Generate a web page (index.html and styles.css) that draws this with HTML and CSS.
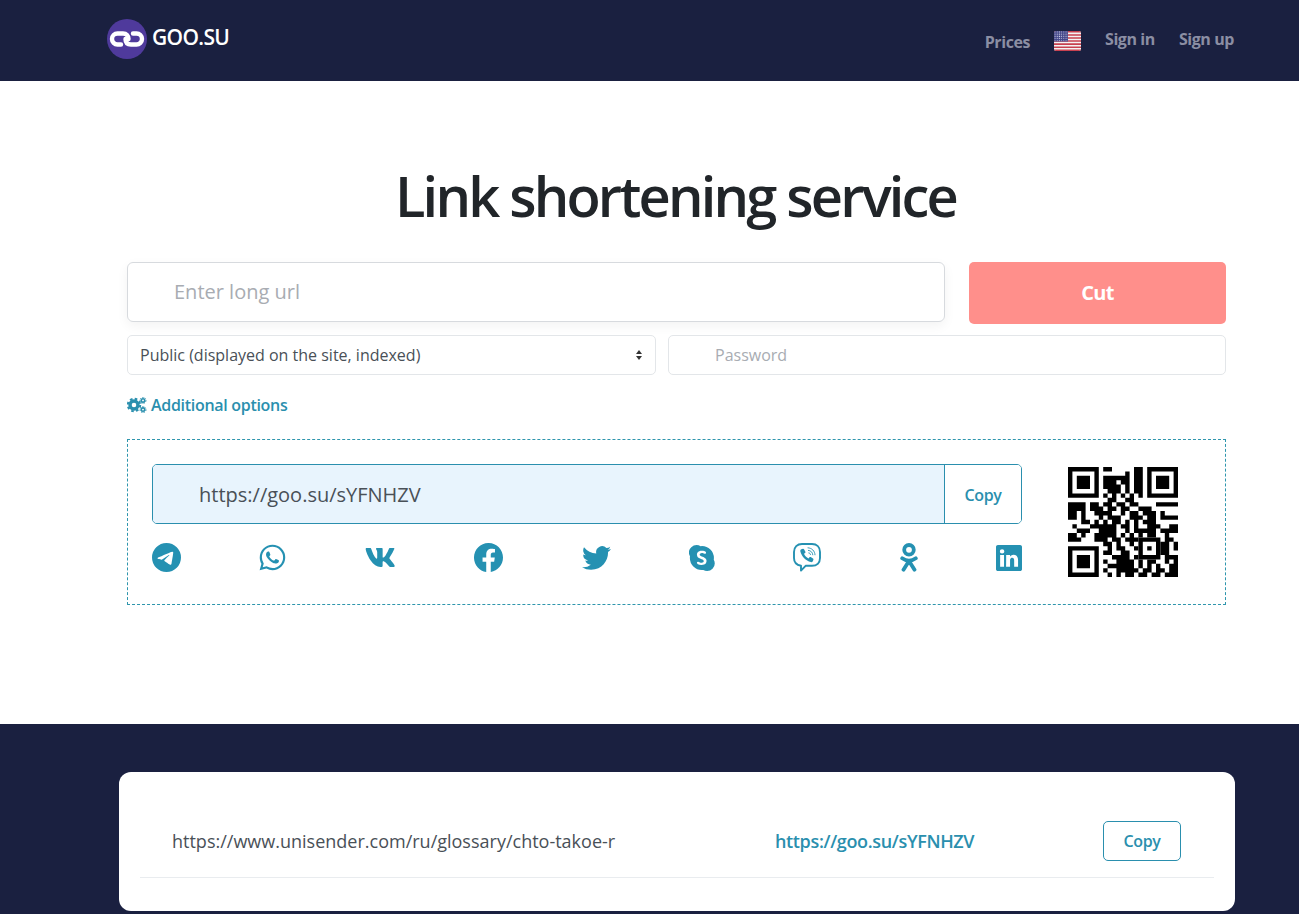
FILE: index.html
```html
<!DOCTYPE html>
<html lang="en">
<head>
<meta charset="utf-8">
<title>GOO.SU</title>
<link rel="stylesheet" href="styles.css">
</head>
<body>
<header class="topbar">
  <a class="brand" href="#">
    <svg class="brand-mark" viewBox="0 0 40 40"><circle cx="20" cy="20" r="20" fill="#4f3a9c"/><path fill="none" stroke="#fff" stroke-width="4.400" stroke-linecap="round" d="M21.500 20c0-3.500-2-5.500-5.500-5.500H10.500a5.500 5.500 0 0 0 0 11H14M18.500 20c0 3.500 2 5.500 5.500 5.500h5.500a5.500 5.500 0 0 0 0-11H26"/></svg>
    <span class="brand-name">GOO.SU</span>
  </a>
  <nav class="nav">
    <a class="nav-link nav-low" href="#">Prices</a>
    <svg class="flag" viewBox="0 0 27 20"><defs><clipPath id="fc"><rect width="27" height="20" rx="2"/></clipPath><pattern id="st" width="2.2" height="2.2" patternUnits="userSpaceOnUse"><circle cx="1" cy="1" r=".55" fill="#d9dcec"/></pattern></defs><g clip-path="url(#fc)"><rect width="27" height="20" fill="#f4f2f2"/><path d="M0 .8h27M0 3.900h27M0 7h27M0 10h27M0 13.100h27M0 16.200h27M0 19.200h27" stroke="#c8404f" stroke-width="1.55"/><rect width="14" height="10.500" fill="#44478a"/><rect width="14" height="10.500" fill="url(#st)"/></g></svg>
    <a class="nav-link" href="#">Sign in</a>
    <a class="nav-link" href="#">Sign up</a>
  </nav>
</header>

<main class="main">
  <h1 class="title">Link shortening service</h1>
  <div class="url-row">
    <div class="long-url">Enter long url</div>
    <button class="cut">Cut</button>
  </div>
  <div class="opt-row">
    <div class="select"><span>Public (displayed on the site, indexed)</span><svg class="carets" viewBox="0 0 8 12"><path d="M4 1l3 4H1zM4 11L1 7h6z" fill="#333"/></svg></div>
    <div class="password">Password</div>
  </div>
  <a class="more" href="#">
    <svg class="cogs" viewBox="0 0 20 16"><g fill="none" stroke="#2a8fae"><circle cx="7" cy="8" r="4" stroke-width="3.400"/><circle cx="7" cy="8" r="6.200" stroke-width="2" stroke-dasharray="2.600 2.270"/><circle cx="16" cy="3.400" r="1.700" stroke-width="1.600"/><circle cx="16" cy="3.400" r="3" stroke-width="1" stroke-dasharray="1.400 1.200"/><circle cx="16" cy="12.600" r="1.700" stroke-width="1.600"/><circle cx="16" cy="12.600" r="3" stroke-width="1" stroke-dasharray="1.400 1.200"/></g></svg>
    <span>Additional options</span>
  </a>
  <section class="result">
    <div class="result-left">
      <div class="short-group">
        <div class="short-url">https://goo.su/sYFNHZV</div>
        <button class="short-copy">Copy</button>
      </div>
      <div class="shares">
        <svg class="ico ico-tg" viewBox="0 0 16 16"><path d="M16 8A8 8 0 1 1 0 8a8 8 0 0 1 16 0zM8.287 5.906c-.778.324-2.334.994-4.666 2.01-.378.15-.577.298-.595.442-.03.243.275.339.69.47l.175.055c.408.133.958.288 1.243.294.26.006.549-.1.868-.32 2.179-1.471 3.304-2.214 3.374-2.23.05-.012.12-.026.166.016.047.041.042.12.037.141-.03.129-1.227 1.241-1.846 1.817-.193.18-.33.307-.358.336a8.154 8.154 0 0 1-.188.186c-.38.366-.664.64.015 1.088.327.216.589.393.85.571.284.194.568.387.936.629.093.06.183.125.27.187.331.236.63.448.997.414.214-.02.435-.22.547-.82.265-1.417.786-4.486.906-5.751a1.426 1.426 0 0 0-.013-.315.337.337 0 0 0-.114-.217.526.526 0 0 0-.31-.093c-.3.005-.763.166-2.984 1.09z"/></svg>
        <svg class="ico ico-wa" viewBox="-.4 -.4 16.800 16.800"><path d="M13.601 2.326A7.854 7.854 0 0 0 7.994 0C3.627 0 .068 3.558.064 7.926c0 1.399.366 2.76 1.057 3.965L0 16l4.204-1.102a7.933 7.933 0 0 0 3.79.965h.004c4.368 0 7.926-3.558 7.93-7.93A7.898 7.898 0 0 0 13.6 2.326zM7.994 14.521a6.573 6.573 0 0 1-3.356-.92l-.24-.144-2.494.654.666-2.433-.156-.251a6.56 6.56 0 0 1-1.007-3.505c0-3.626 2.957-6.584 6.591-6.584a6.56 6.56 0 0 1 4.66 1.931 6.557 6.557 0 0 1 1.928 4.66c-.004 3.639-2.961 6.592-6.592 6.592zm3.615-4.934c-.197-.099-1.17-.578-1.353-.646-.182-.065-.315-.099-.445.099-.133.197-.513.646-.627.775-.114.133-.232.148-.43.05-.197-.1-.836-.308-1.592-.985-.59-.525-.985-1.175-1.103-1.372-.114-.198-.011-.304.088-.403.087-.088.197-.232.296-.346.1-.114.133-.198.198-.33.065-.134.034-.248-.015-.347-.05-.099-.445-1.076-.612-1.47-.16-.389-.323-.335-.445-.34-.114-.007-.247-.007-.38-.007a.729.729 0 0 0-.529.247c-.182.198-.691.677-.691 1.654 0 .977.71 1.916.81 2.049.098.133 1.394 2.132 3.383 2.992.47.205.84.326 1.129.418.475.152.904.129 1.246.08.38-.058 1.171-.48 1.338-.943.164-.464.164-.86.114-.943-.049-.084-.182-.133-.38-.232z"/></svg>
        <svg class="ico ico-vk" viewBox="0 96 576 320" preserveAspectRatio="none"><path d="M545 117.7c3.7-12.5 0-21.7-17.8-21.7h-58.9c-15 0-21.9 7.9-25.6 16.7 0 0-31.5 77.2-76.1 127.2-14.4 14.4-21 19-28.9 19-3.9 0-9.9-4.6-9.9-17.1V117.7c0-15-4.4-21.7-16.8-21.7h-92.6c-9.4 0-15 7-15 13.5 0 14.2 21.2 17.5 23.4 57.4v86.8c0 19-3.4 22.5-10.9 22.5-20 0-68.6-73.4-97.4-157.4-5.8-16.3-11.5-22.9-26.6-22.9H32.9C16.1 96 12.7 103.9 12.7 112.7c0 15.6 20 93.1 93.1 195.5C154.5 378.2 223 416 285.4 416c37.5 0 42.1-8.4 42.1-22.9 0-66.8-3.4-73.1 15.4-73.1 8.7 0 23.7 4.4 58.7 38.1 40 40 46.6 57.9 69 57.9h58.9c16.8 0 25.3-8.4 20.4-25-11.2-34.9-86.9-106.7-90.3-111.5-8.7-11.2-6.2-16.2 0-26.2.1-.1 72-101.3 79.4-135.6z"/></svg>
        <svg class="ico ico-fb" viewBox="0 0 16 16"><path d="M16 8.049c0-4.446-3.582-8.05-8-8.05C3.58 0-.002 3.603-.002 8.05c0 4.017 2.926 7.347 6.75 7.951v-5.625h-2.03V8.05H6.75V6.275c0-2.017 1.195-3.131 3.022-3.131.876 0 1.791.157 1.791.157v1.98h-1.009c-.993 0-1.303.621-1.303 1.258v1.51h2.218l-.354 2.326H9.25V16c3.824-.604 6.75-3.934 6.75-7.951z"/></svg>
        <svg class="ico ico-tw" viewBox="0 2 16 13"><path d="M5.026 15c6.038 0 9.341-5.003 9.341-9.334 0-.14 0-.282-.006-.422A6.685 6.685 0 0 0 16 3.542a6.658 6.658 0 0 1-1.889.518 3.301 3.301 0 0 0 1.447-1.817 6.533 6.533 0 0 1-2.087.793A3.286 3.286 0 0 0 7.875 6.03a9.325 9.325 0 0 1-6.767-3.429 3.289 3.289 0 0 0 1.018 4.382A3.323 3.323 0 0 1 .64 6.575v.045a3.288 3.288 0 0 0 2.632 3.218 3.203 3.203 0 0 1-.865.115 3.23 3.23 0 0 1-.614-.057 3.283 3.283 0 0 0 3.067 2.277A6.588 6.588 0 0 1 .78 13.58a6.32 6.32 0 0 1-.78-.045A9.344 9.344 0 0 0 5.026 15z"/></svg>
        <svg class="ico ico-sk" viewBox="0 0 16 16"><path d="M4.671 0c.88 0 1.733.247 2.468.702a7.423 7.423 0 0 1 6.02 2.118 7.372 7.372 0 0 1 2.167 5.215c0 .344-.024.687-.072 1.026a4.662 4.662 0 0 1 .6 2.281 4.645 4.645 0 0 1-1.37 3.294A4.673 4.673 0 0 1 11.18 16c-.84 0-1.658-.226-2.37-.644a7.423 7.423 0 0 1-6.114-2.107A7.374 7.374 0 0 1 .529 8.035c0-.363.026-.724.08-1.081a4.644 4.644 0 0 1 .807-5.592A4.668 4.668 0 0 1 4.67 0zm.447 7.01c.18.309.43.572.729.769a7.07 7.07 0 0 0 1.257.653c.492.205.873.38 1.145.523.229.112.437.264.615.448.135.142.21.331.21.528a.872.872 0 0 1-.335.723c-.291.196-.64.289-.99.264a2.618 2.618 0 0 1-1.048-.206 11.44 11.44 0 0 1-.532-.253 1.284 1.284 0 0 0-.587-.15.717.717 0 0 0-.501.176.63.63 0 0 0-.195.491.796.796 0 0 0 .148.482 1.2 1.2 0 0 0 .456.354 5.113 5.113 0 0 0 2.212.419 4.554 4.554 0 0 0 1.624-.265 2.296 2.296 0 0 0 1.08-.801c.267-.39.402-.855.386-1.327a2.09 2.09 0 0 0-.279-1.101 2.53 2.53 0 0 0-.772-.792A7.198 7.198 0 0 0 8.486 7.3a1.05 1.05 0 0 0-.145-.058 18.182 18.182 0 0 1-1.013-.447 1.827 1.827 0 0 1-.54-.387.727.727 0 0 1-.2-.508.805.805 0 0 1 .385-.723 1.76 1.76 0 0 1 .968-.247c.26-.003.52.03.772.096.274.079.542.177.802.293.105.049.22.075.336.076a.6.6 0 0 0 .453-.19.69.69 0 0 0 .18-.488.717.717 0 0 0-.17-.475 1.374 1.374 0 0 0-.556-.384 5.05 5.05 0 0 0-1.01-.286 6.504 6.504 0 0 0-.975-.07c-.5-.01-.998.08-1.46.268a2.375 2.375 0 0 0-1.049.81 2.134 2.134 0 0 0-.392 1.293c-.009.36.087.718.27 1.03z"/></svg>
        <svg class="ico ico-vb" viewBox="0 0 28 29"><path class="line" stroke-width="1.900" d="M9 1h10c4.800 0 8 3.200 8 8v6c0 4.800-3.200 7.800-8 7.800h-6.400L8 27.600v-4.900C3.600 22 1 19.300 1 15V9c0-4.800 3.200-8 8-8z"/><path d="M8.400 6.300l1.500-.5c.5-.1.900.1 1.100.5l1.400 2.400c.2.400.1.900-.3 1.200l-1.100.9c.9 2.100 2.400 3.700 4.500 4.700l1-1.200c.3-.3.800-.4 1.200-.2l2.300 1.400c.4.300.6.700.4 1.200l-.6 1.500c-.3.700-1.200 1.100-2 .9C12.800 17.800 8.700 13.700 7.300 8.300c-.1-.8.300-1.700 1.100-2z"/><path class="line" stroke-width=".9" d="M15 4.800c3.900.2 6.800 3.100 7 7M15.400 7.400c2.500.2 4.200 1.900 4.400 4.400M15.800 9.900c1 .1 1.600.7 1.700 1.700"/></svg>
        <svg class="ico ico-ok" viewBox="0 0 18 29"><path class="line" stroke-width="3.800" d="M9 2a4.800 4.800 0 1 1 0 9.600A4.800 4.800 0 0 1 9 2zM2.200 15.300c4.200 3 9.400 3 13.600 0M9 18l-5.500 8.700M9 18l5.500 8.700"/></svg>
        <svg class="ico ico-li" viewBox="0 0 16 16"><path d="M0 1.146C0 .513.526 0 1.175 0h13.65C15.474 0 16 .513 16 1.146v13.708c0 .633-.526 1.146-1.175 1.146H1.175C.526 16 0 15.487 0 14.854V1.146zm4.943 12.248V6.169H2.542v7.225h2.401zm-1.2-8.212c.837 0 1.358-.554 1.358-1.248-.015-.709-.52-1.248-1.342-1.248-.822 0-1.359.54-1.359 1.248 0 .694.521 1.248 1.327 1.248h.016zm4.908 8.212V9.359c0-.216.016-.432.08-.586.173-.431.568-.878 1.232-.878.869 0 1.216.662 1.216 1.634v3.865h2.401V9.25c0-2.22-1.184-3.252-2.764-3.252-1.274 0-1.845.7-2.165 1.193v.025h-.016a5.54 5.54 0 0 1 .016-.025V6.169h-2.4c.03.678 0 7.225 0 7.225h2.4z"/></svg>
      </div>
    </div>
    <svg class="qr" viewBox="0 0 25 25">
      <path fill-rule="evenodd" d="M0 0h7v7H0zM1 1v5h5V1zM2 2h3v3H2zM18 0h7v7h-7zM19 1v5h5V1zM20 2h3v3h-3zM0 18h7v7H0zM1 19v5h5v-5zM2 20h3v3H2zM16 16h5v5h-5zM17 17v3h3v-3zM18 18h1v1h-1z"/>
      <path fill="none" stroke="#000" d="M8 .5h2M15 .5h2M13 1.500h1M15 1.500h2M8 2.500h6M15 2.500h2M8 3.500h3M12 3.500h2M15 3.500h2M8 4.500h4M13 4.500h1M15 4.500h2M9 5.500h3M13 5.500h1M15 5.500h2M8 6.500h1M10 6.500h1M12 6.500h1M14 6.500h1M16 6.500h1M9 7.500h2M13 7.500h2M0 8.500h4M5 8.500h2M8 8.500h2M11 8.500h2M14 8.500h2M20 8.500h5M0 9.500h4M5 9.500h3M9 9.500h2M12 9.500h2M16 9.500h3M0 10.500h2M3 10.500h1M6 10.500h4M12 10.500h1M14 10.500h2M17 10.500h3M21 10.500h1M0 11.500h2M3 11.500h1M7 11.500h1M9 11.500h3M14 11.500h3M18 11.500h2M21 11.500h4M3 12.500h2M6 12.500h1M8 12.500h1M10 12.500h2M13 12.500h1M15 12.500h1M17 12.500h3M1 13.500h1M5 13.500h6M12 13.500h2M15 13.500h1M18 13.500h3M23 13.500h2M2 14.500h3M7 14.500h4M13 14.500h1M15 14.500h5M21 14.500h4M0 15.500h2M3 15.500h1M6 15.500h5M12 15.500h1M14 15.500h1M16 15.500h1M18 15.500h2M22 15.500h1M0 16.500h3M6 16.500h3M10 16.500h2M13 16.500h3M22 16.500h2M8 17.500h2M11 17.500h1M14 17.500h1M21 17.500h2M24 17.500h1M9 18.500h1M11 18.500h2M15 18.500h1M21 18.500h2M24 18.500h1M8 19.500h2M12 19.500h2M21 19.500h2M10 20.500h4M15 20.500h1M22 20.500h3M8 21.500h1M11 21.500h4M16 21.500h1M18 21.500h2M22 21.500h1M24 21.500h1M9 22.500h6M16 22.500h1M18 22.500h1M20 22.500h1M23 22.500h2M8 23.500h1M11 23.500h5M17 23.500h2M20 23.500h2M23 23.500h2M9 24.500h1M11 24.500h1M13 24.500h2M16 24.500h2M19 24.500h2M22 24.500h3"/>
    </svg>
  </section>
</main>

<section class="history">
  <div class="card">
    <div class="link-row">
      <div class="row-long">https://www.unisender.com/ru/glossary/chto-takoe-r</div>
      <a class="row-short" href="#">https://goo.su/sYFNHZV</a>
      <button class="row-copy">Copy</button>
    </div>
  </div>
</section>
</body>
</html>
```
FILE: styles.css
```css
* { box-sizing: border-box; }
html, body { margin: 0; height: 914px; overflow: hidden; }
body { font-family: "Open Sans", sans-serif; color: #495057; background: #fff; display: flex; flex-direction: column; }
a { text-decoration: none; }
button { font-family: inherit; cursor: pointer; }

.topbar { height: 81px; flex: none; background: #1a2040; display: flex; justify-content: space-between; padding: 0 65px 0 107px; }
.brand { display: flex; align-items: flex-start; gap: 5px; padding-top: 19px; }
.brand-mark { width: 40px; height: 40px; }
.brand-name { color: #fff; font-size: 21px; font-weight: 600; letter-spacing: -.65px; line-height: 36px; }
.nav { display: flex; align-items: flex-start; padding-top: 27px; }
.nav-link { color: #8b8ea3; font-size: 16px; font-weight: 700; letter-spacing: -.42px; line-height: 24px; margin-left: 24px; }
.nav-low { margin-top: 3px; margin-left: 0; }
.flag { width: 27px; height: 20px; margin: 4px 0 0 24px; }

.main { flex: 1; padding: 0 73px 0 127px; display: flex; flex-direction: column; }
.title { margin: 76px 0 0; height: 76px; text-align: center; color: #212529; font-size: 56px; line-height: 76px; font-weight: 600; letter-spacing: -2.8px; padding-right: 2px; }
.url-row { display: flex; align-items: flex-start; gap: 24px; margin-top: 29px; }
.long-url { flex: 1; height: 60px; border: 1px solid #d7dade; border-radius: 6px; box-shadow: 0 4px 12px rgba(0,0,0,.05); padding-left: 46px; font-size: 20px; line-height: 58px; color: #a8acb2; }
.cut { width: 257px; height: 62px; padding-bottom: 3px; border: 0; border-radius: 5px; background: #ff8f8b; color: #fff; font-size: 20px; font-weight: 700; letter-spacing: -.7px; }
.opt-row { display: flex; gap: 12px; margin-top: 11px; }
.select { width: 529px; height: 40px; border: 1px solid #e3e6e9; border-radius: 5px; padding: 0 12px; display: flex; justify-content: space-between; align-items: center; font-size: 16px; }
.carets { width: 8px; height: 12px; }
.password { flex: 1; height: 40px; border: 1px solid #e3e6e9; border-radius: 5px; padding-left: 46px; font-size: 16px; line-height: 38px; color: #a8acb2; }
.more { display: flex; align-items: center; gap: 4px; margin-top: 18px; height: 24px; color: #2a8fae; font-size: 16px; font-weight: 600; letter-spacing: -.3px; }
.cogs { width: 20px; height: 16px; }
.result { margin-top: 22px; height: 166px; border: 1px dashed #2f96ad; padding: 24px 47px 0 24px; display: flex; justify-content: space-between; align-items: flex-start; }
.result-left { width: 870px; }
.short-group { display: flex; height: 60px; border: 1px solid #2a8fae; border-radius: 5px; overflow: hidden; }
.short-url { flex: 1; background: #e8f4fd; padding-left: 46px; font-size: 20px; line-height: 60px; color: #495057; }
.short-copy { width: 77px; padding-top: 2px; border: 0; border-left: 1px solid #2a8fae; background: #fff; color: #2a8fae; font-size: 16px; font-weight: 600; letter-spacing: -.4px; }
.shares { display: flex; justify-content: space-between; align-items: center; margin-top: 19px; height: 29px; }
.ico { fill: #2591b2; }
.ico-tg, .ico-fb { width: 29px; height: 29px; }
.ico-wa { width: 27px; height: 27px; }
.ico-vk { width: 31px; height: 19px; }
.ico-tw { width: 29px; height: 24px; }
.ico-sk, .ico-li { width: 26px; height: 26px; }
.ico-vb { width: 28px; height: 29px; }
.ico-ok { width: 18px; height: 29px; }
.line { fill: none; stroke: #2591b2; stroke-linecap: round; stroke-linejoin: round; }
.qr { width: 110px; height: 110px; margin-top: 3px; }

.history { height: 190px; flex: none; background: #1a2040; padding: 48px 64px 0 119px; }
.card { height: 139px; background: #fff; border-radius: 12px; padding: 0 21px; }
.link-row { height: 106px; border-bottom: 1px solid #e9ecef; display: flex; align-items: center; padding: 32px 33px 0 32px; }
.row-long { width: 603px; font-size: 18px; line-height: 24px; }
.row-short { flex: 1; color: #2a8fae; font-size: 18px; font-weight: 600; letter-spacing: -.35px; }
.row-copy { width: 78px; height: 40px; border: 1px solid #2a8fae; border-radius: 5px; background: #fff; color: #2a8fae; font-size: 16px; font-weight: 600; letter-spacing: -.4px; }
```
